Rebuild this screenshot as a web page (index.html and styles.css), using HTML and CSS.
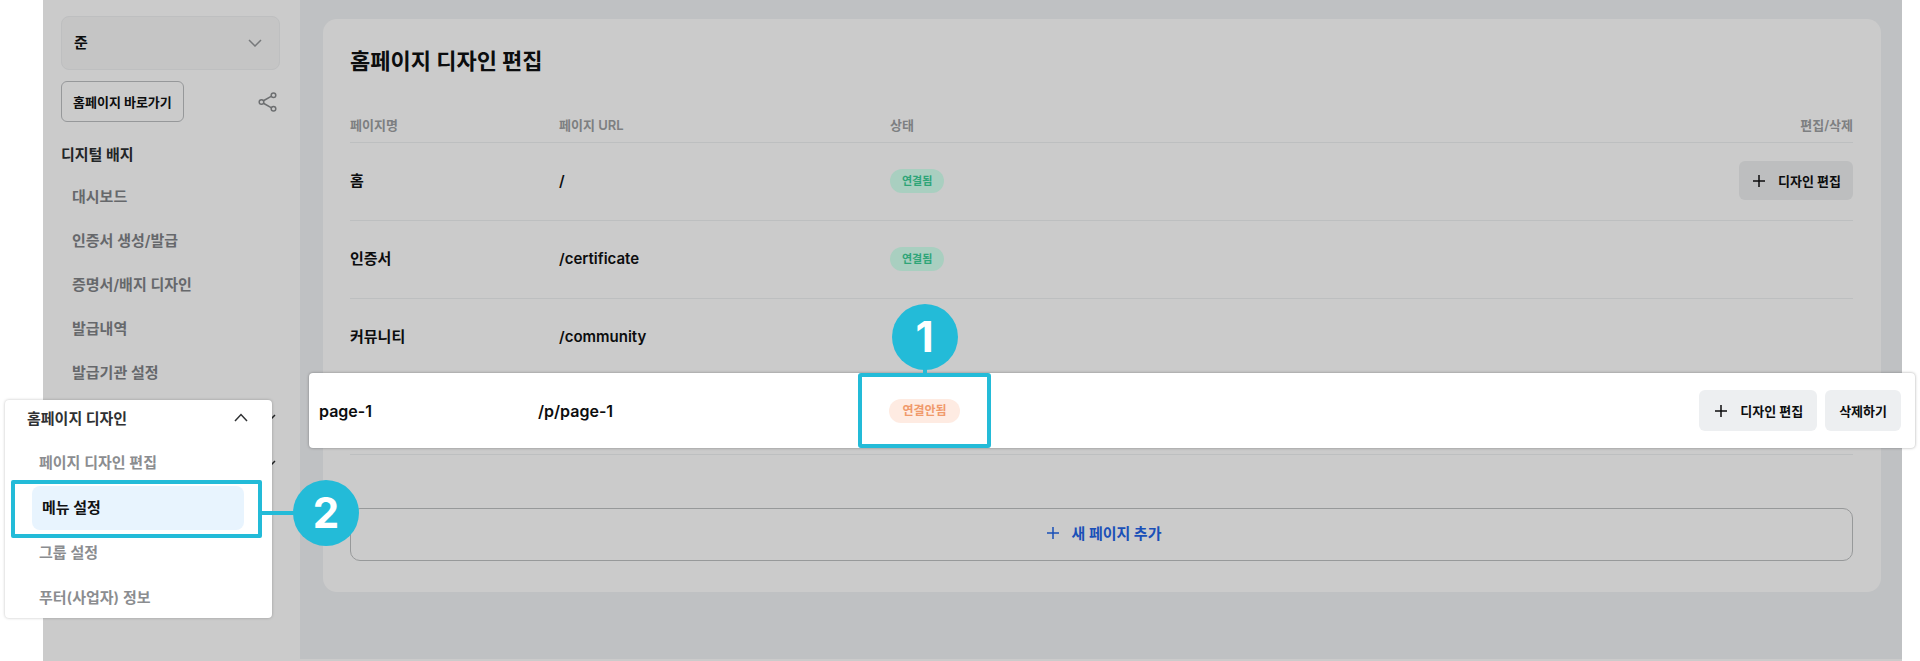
FILE: index.html
```html
<!DOCTYPE html>
<html lang="ko">
<head>
    <meta charset="UTF-8">
    <meta name="viewport" content="width=device-width, initial-scale=1.0">
    <title>홈페이지 디자인 편집</title>
    <link rel="stylesheet" href="styles.css">
</head>
<body>
    <div class="app">
        <aside class="sidebar">
            <div class="org">
                <select class="org-select" aria-label="기관 선택">
                    <option>준</option>
                </select>
                <svg class="org-arrow" width="14" height="8" viewBox="0 0 14 8"><path d="M1 1l6 6 6-6"/></svg>
            </div>
            <div class="shortcut">
                <button type="button" class="home-btn">홈페이지 바로가기</button>
                <button type="button" class="share-btn" aria-label="공유">
                    <svg width="20" height="20" viewBox="0 0 20 20">
                        <path d="M5 9l9-5.200M5 11l9 5.200"/>
                        <circle cx="3.500" cy="10" r="2.300"/>
                        <circle cx="15.500" cy="3.200" r="2.300"/>
                        <circle cx="15.500" cy="16.800" r="2.300"/>
                    </svg>
                </button>
            </div>
            <nav class="nav">
                <h2>디지털 배지</h2>
                <ul>
                    <li><a href="#">대시보드</a></li>
                    <li><a href="#">인증서 생성/발급</a></li>
                    <li><a href="#">증명서/배지 디자인</a></li>
                    <li><a href="#">발급내역</a></li>
                    <li><a href="#">발급기관 설정</a></li>
                </ul>
                <button type="button" class="fold" aria-label="메뉴 펼치기">
                    <svg width="14" height="8" viewBox="0 0 14 8"><path d="M1 1l6 6 6-6"/></svg>
                </button>
                <button type="button" class="fold" aria-label="메뉴 펼치기">
                    <svg width="14" height="8" viewBox="0 0 14 8"><path d="M1 1l6 6 6-6"/></svg>
                </button>
            </nav>

            <!-- 강조된 메뉴 -->
            <div class="menu-pop">
                <button type="button" class="menu-head">
                    홈페이지 디자인
                    <svg width="14" height="9" viewBox="0 0 14 9"><path d="M1 8l6-6.500L13 8"/></svg>
                </button>
                <ul>
                    <li><a href="#">페이지 디자인 편집</a></li>
                    <li class="active">
                        <a href="#">메뉴 설정</a>
                        <span class="bubble bubble-right">2</span>
                    </li>
                    <li><a href="#">그룹 설정</a></li>
                    <li><a href="#">푸터(사업자) 정보</a></li>
                </ul>
            </div>
        </aside>

        <main class="main">
            <section class="card">
                <h1>홈페이지 디자인 편집</h1>
                <table class="pages">
                    <thead>
                        <tr>
                            <th class="col-name">페이지명</th>
                            <th class="col-url">페이지 URL</th>
                            <th>상태</th>
                            <th class="col-edit">편집/삭제</th>
                        </tr>
                    </thead>
                    <tbody>
                        <tr>
                            <td>홈</td>
                            <td>/</td>
                            <td><span class="badge">연결됨</span></td>
                            <td class="col-edit">
                                <button type="button" class="btn">
                                    <svg width="14" height="14" viewBox="0 0 14 14"><path d="M7 1v12M1 7h12"/></svg>
                                    디자인 편집
                                </button>
                            </td>
                        </tr>
                        <tr>
                            <td>인증서</td>
                            <td>/certificate</td>
                            <td><span class="badge">연결됨</span></td>
                            <td></td>
                        </tr>
                        <tr>
                            <td>커뮤니티</td>
                            <td>/community</td>
                            <td></td>
                            <td></td>
                        </tr>
                        <tr>
                            <td></td>
                            <td></td>
                            <td></td>
                            <td></td>
                        </tr>
                    </tbody>
                </table>
                <button type="button" class="add-btn">
                    <svg width="14" height="14" viewBox="0 0 14 14"><path d="M7 1v12M1 7h12"/></svg>
                    새 페이지 추가
                </button>

                <!-- 강조된 행 -->
                <div class="row-pop">
                    <span class="row-name">page-1</span>
                    <span class="row-url">/p/page-1</span>
                    <div class="row-status">
                        <span class="badge badge-off">연결안됨</span>
                        <span class="bubble bubble-top">1</span>
                    </div>
                    <div class="row-actions">
                        <button type="button" class="btn">
                            <svg width="14" height="14" viewBox="0 0 14 14"><path d="M7 1v12M1 7h12"/></svg>
                            디자인 편집
                        </button>
                        <button type="button" class="btn">삭제하기</button>
                    </div>
                </div>
            </section>
        </main>
    </div>
</body>
</html>
```
FILE: styles.css
```css
* {
    box-sizing: border-box;
}

body {
    margin: 0;
    background-color: #fff;
    font-family: Inter, "Noto Sans CJK KR", sans-serif;
    font-size: 15px;
    line-height: 20px;
    color: #0c0d0e;
}

button,
select {
    font-family: inherit;
    color: inherit;
    cursor: pointer;
}

a {
    color: inherit;
    text-decoration: none;
}

ul {
    list-style: none;
    margin: 0;
    padding: 0;
}

svg {
    fill: none;
    stroke: currentColor;
    stroke-width: 1.5;
    flex: none;
}

.app {
    display: flex;
    min-height: 100vh;
    margin: 0 18px 0 43px;
    background-color: #bfc1c3;
    border-bottom: 2px solid #cbcbcb;
}

/* sidebar */
.sidebar {
    position: relative;
    z-index: 1;
    flex: none;
    width: 257px;
    padding: 16px 20px 0 18px;
    background-color: #cbcbcb;
}

.org {
    position: relative;
}

.org-select {
    display: block;
    width: 100%;
    height: 54px;
    padding: 0 12px 2px;
    appearance: none;
    background-color: #c5c5c5;
    border: 1px solid #bebfc0;
    border-radius: 8px;
    font-size: 15px;
    font-weight: 600;
}

.org-arrow {
    position: absolute;
    right: 18px;
    top: 23px;
    color: #77797b;
}

.shortcut {
    display: flex;
    align-items: center;
    justify-content: space-between;
    margin-top: 11px;
}

.home-btn {
    height: 41px;
    padding: 0 11px;
    background-color: transparent;
    border: 1px solid #96989a;
    border-radius: 6px;
    font-size: 13px;
    font-weight: 700;
}

.share-btn {
    display: flex;
    padding: 0 2px;
    background: none;
    border: none;
    color: #6d6f71;
}

.nav h2 {
    margin: 23px 0 10px;
    font-size: 15px;
    line-height: 20px;
    font-weight: 700;
    color: #232527;
}

.nav li a {
    display: block;
    padding-left: 11px;
    line-height: 44px;
    font-weight: 600;
    color: #66686b;
}

.fold {
    display: flex;
    align-items: center;
    justify-content: flex-end;
    width: 100%;
    height: 46px;
    padding: 0 4px 0 0;
    background: none;
    border: none;
    color: #232527;
}

.menu-pop {
    position: absolute;
    left: -38px;
    top: 400px;
    width: 267px;
    height: 218px;
    background-color: #fff;
    border-radius: 4px;
    box-shadow: 0 0 3px rgba(0, 0, 0, 0.25);
}

.menu-head {
    display: flex;
    align-items: center;
    justify-content: space-between;
    width: 100%;
    height: 34px;
    margin-bottom: 7px;
    padding: 0 24px 0 22px;
    background: none;
    border: none;
    font-size: 15px;
    font-weight: 700;
    color: #2f3133;
}

.menu-pop li {
    position: relative;
    height: 45px;
}

.menu-pop li a {
    display: block;
    padding-left: 34px;
    line-height: 44px;
    font-weight: 600;
    color: #8b8d90;
}

.menu-pop .active a {
    margin: 0 28px 0 27px;
    padding-left: 10px;
    background-color: #e8f4fe;
    border-radius: 8px;
    font-weight: 700;
    color: #111214;
}

.menu-pop .active::before {
    content: "";
    position: absolute;
    left: 6px;
    right: 10px;
    top: -6px;
    bottom: -7px;
    border: 4px solid #23bbd8;
    border-radius: 2px;
}

/* number bubbles */
.bubble {
    position: absolute;
    display: flex;
    align-items: center;
    justify-content: center;
    width: 66px;
    height: 66px;
    border-radius: 50%;
    background-color: #23bbd8;
    font-size: 42px;
    font-weight: 700;
    color: #fff;
}

.bubble::before {
    content: "";
    position: absolute;
    background-color: #23bbd8;
}

.bubble-right {
    left: 288px;
    top: -6px;
}

.bubble-right::before {
    right: 65px;
    width: 32px;
    height: 4px;
}

.bubble-top {
    top: -73px;
}

.bubble-top::before {
    top: 65px;
    width: 4px;
    height: 6px;
}

/* content */
.main {
    flex: 1;
    padding: 19px 21px 0 23px;
}

.card {
    position: relative;
    padding: 26px 28px 31px 27px;
    background-color: #cbcbcb;
    border-radius: 14px;
}

.card h1 {
    margin: 0 0 30px;
    font-size: 22px;
    line-height: 32px;
    font-weight: 700;
}

.pages {
    width: 100%;
    table-layout: fixed;
    border-collapse: separate;
    border-spacing: 0;
}

.pages th {
    height: 36px;
    padding: 0;
    border-bottom: 1px solid #bdbfc0;
    font-size: 13px;
    font-weight: 600;
    text-align: left;
    color: #7d7f81;
}

.pages td {
    height: 78px;
    padding: 0 0 2px;
    border-bottom: 1px solid #bdbfc0;
    font-weight: 600;
}

.pages .col-name {
    width: 209px;
}

.pages .col-url {
    width: 331px;
}

.pages .col-edit {
    text-align: right;
}

.badge {
    display: inline-block;
    padding: 0 12px;
    border-radius: 12px;
    background-color: #a9cfc0;
    font-size: 11px;
    line-height: 24px;
    font-weight: 600;
    color: #2fa578;
}

.badge-off {
    padding: 0 13px;
    background-color: #feebe2;
    font-size: 12px;
    color: #f09a6c;
}

.btn {
    display: inline-flex;
    align-items: center;
    gap: 12px;
    height: 39px;
    padding: 0 12px;
    background-color: #bdbebf;
    border: none;
    border-radius: 6px;
    font-size: 13px;
    font-weight: 700;
}

.btn svg {
    margin-left: 1px;
}

.add-btn {
    display: flex;
    align-items: center;
    justify-content: center;
    gap: 12px;
    width: 100%;
    height: 53px;
    margin-top: 53px;
    padding: 0 0 4px 4px;
    background-color: transparent;
    border: 1px solid #97999a;
    border-radius: 10px;
    font-size: 15px;
    font-weight: 700;
    color: #1a50b8;
}

.row-pop {
    position: absolute;
    left: -14px;
    right: -34px;
    top: 354px;
    display: flex;
    align-items: center;
    height: 75px;
    padding: 0 14px 0 10px;
    background-color: #fff;
    border-radius: 4px;
    box-shadow: 0 0 3px rgba(0, 0, 0, 0.35);
    font-size: 16px;
    font-weight: 600;
}

.row-name {
    width: 219px;
}

.row-url {
    width: 320px;
}

.row-status {
    position: relative;
    display: flex;
    align-items: center;
    justify-content: center;
    align-self: stretch;
    width: 133px;
    border: 4px solid #23bbd8;
    border-radius: 3px;
}

.row-actions {
    display: flex;
    gap: 8px;
    margin-left: auto;
}

.row-actions .btn {
    height: 41px;
    padding: 0 14px;
    background-color: #edeff1;
}
```
